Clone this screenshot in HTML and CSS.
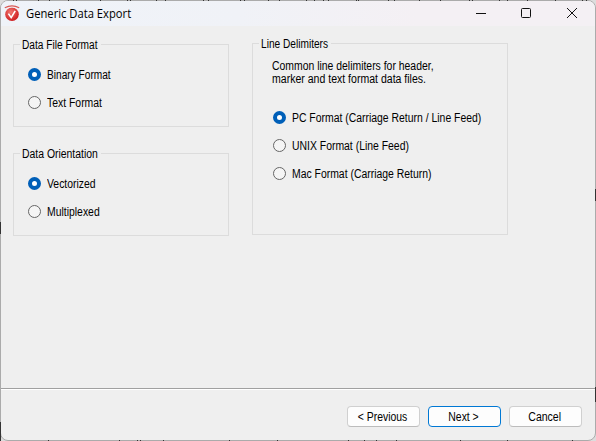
FILE: index.html
```html
<!DOCTYPE html>
<html lang="en">
<head>
<meta charset="utf-8">
<title>Generic Data Export</title>
<link rel="stylesheet" href="styles.css">
</head>
<body>
<div class="window">
  <header class="titlebar">
    <svg class="logo" width="16" height="17" viewBox="0 0 16 17">
      <defs><radialGradient id="ball" cx="40%" cy="35%" r="65%"><stop offset="0" stop-color="#f07872"/><stop offset="1" stop-color="#cf1e20"/></radialGradient></defs>
      <circle cx="8" cy="9.2" r="6.8" fill="url(#ball)"/>
      <path d="M.8 4.4Q8-1.2 15.2 4.4" fill="none" stroke="#f4eef2" stroke-width="1.4"/>
      <path d="M.8 2.8Q8-1.2 15.2 2.8" fill="none" stroke="#d85a55" stroke-width="1.3"/>
      <path d="M4.4 8.6l2.8 4L11.2 5.8" fill="none" stroke="#fff" stroke-width="1.6"/>
    </svg>
    <h1 class="title">Generic Data Export</h1>
    <svg class="controls" width="104" height="12" viewBox="0 0 104 12" fill="none" stroke="#111">
      <path d="M0 5.5h10"/><rect x="45.5" y=".5" width="9" height="9" rx="1"/><path d="M91 0l10 10M101 0L91 10"/>
    </svg>
  </header>
  <main class="content">
    <div class="column">
      <section class="group">
        <h2 class="legend l-long"><span class="t w-file">Data File Format</span></h2>
        <label class="option"><i class="radio on"></i><span class="t w-file">Binary Format</span></label>
        <label class="option"><i class="radio"></i><span class="t">Text Format</span></label>
      </section>
      <section class="group">
        <h2 class="legend l-long"><span class="t">Data Orientation</span></h2>
        <label class="option"><i class="radio on"></i><span class="t">Vectorized</span></label>
        <label class="option"><i class="radio"></i><span class="t">Multiplexed</span></label>
      </section>
    </div>
    <section class="group wide">
      <h2 class="legend l-short"><span class="t w-file">Line Delimiters</span></h2>
      <p class="hint"><span class="t">Common line delimiters for header,</span><br><span class="t w-hint">marker and text format data files.</span></p>
      <label class="option"><i class="radio on"></i><span class="t">PC Format (Carriage Return / Line Feed)</span></label>
      <label class="option"><i class="radio"></i><span class="t">UNIX Format (Line Feed)</span></label>
      <label class="option"><i class="radio"></i><span class="t">Mac Format (Carriage Return)</span></label>
    </section>
  </main>
  <footer class="footer">
    <button class="button"><span class="t">&lt; Previous</span></button>
    <button class="button primary"><span class="t">Next &gt;</span></button>
    <button class="button"><span class="t w-hint">Cancel</span></button>
  </footer>
</div>
<svg class="edge" width="596" height="441" fill="none" stroke="#333">
  <path d="M13 .5h1m2 0h1m21 0h1m10 0h1m18 0h1m31 0h1m26 0h1m2 0h1m25 0h1m8 0h1m37 0h1m4 0h1m31 0h1m3 0h1m23 0h1m10 0h1m26 0h1m7 0h1m8 0h1m4 0h1m27 0h1m1 0h1m29 0h1m5 0h1m24 0h1m20 0h1m28 0h1m2 0h1m26 0h1m7 0h1m19 0h1m27 0h1m26 0h1m3 0h1"/>
  <path d="M48 440.500h1m70 0h1m17 0h1m2 0h1m22 0h1m65 0h1m47 0h1m70 0h1m15 0h1m11 0h1m19 0h1m63 0h1m46 0h1m64 0h1"/>
  <path d="M.5 222v12M.5 422v19M595.5 189v12M595.5 387v15"/>
</svg>
</body>
</html>
```
FILE: styles.css
```css
* { box-sizing: border-box; }
body {
  margin: 0; width: 596px; height: 441px; overflow: hidden; background: #ddd;
  font: 12px/13px "Liberation Sans", Arial, sans-serif; color: #000;
}
.window {
  width: 596px; height: 441px; border: 1px solid #ababab; border-radius: 8px;
  background: #efefef; overflow: hidden; display: flex; flex-direction: column;
}
.titlebar {
  height: 25px; flex: none; display: flex; align-items: center; padding: 0 15px 0 3px;
  background: linear-gradient(90deg, #eff3f9, #f0f2f7 40%, #f4f0f4 70%, #f4f0f4);
}
.title {
  margin: 1px auto 0 6px; font: 400 12px/16px "Open Sans", "Noto Sans", sans-serif;
  transform: scaleX(.935); transform-origin: left;
}
.content { flex: 1; display: flex; align-items: flex-start; gap: 23px; padding: 17px 12px 0; }
.column { display: flex; flex-direction: column; gap: 26px; padding-top: 1px; }
.group { width: 216px; height: 83px; border: 1px solid #dcdcdc; padding-left: 7px; }
.legend {
  height: 13px; margin: -6px 0 16px -1px; padding: 0 2px;
  background: #efefef; font: inherit; white-space: nowrap;
}
.l-long { width: 81px; }
.l-short { width: 72px; }
.option { display: flex; align-items: center; gap: 6px; height: 13px; margin: 0 0 15px 7px; white-space: nowrap; }
.option .t { padding-top: 2px; }
.radio { width: 13px; height: 13px; flex: none; border: 1px solid #666; border-radius: 50%; background: #f5f5f5; }
.radio.on { border: 4px solid #005fb8; background: #fff; }
.wide { width: 256px; height: 192px; padding-left: 7px; }
.wide .legend { margin-bottom: 9px; }
.wide .option { margin-left: 13px; }
.hint { margin: 0 0 25px 12px; white-space: nowrap; }
.footer {
  height: 52px; flex: none; border-top: 1px solid #a0a0a0; box-shadow: inset 0 1px #fff;
  display: flex; justify-content: flex-end; gap: 8px; padding: 17px 13px 0 0;
}
.button {
  width: 73px; height: 21px; padding: 1px 2px 0 0; border: 1px solid #d0d0d0; border-bottom-color: #bcbcbc;
  border-radius: 4px; background: #fdfdfd; font: inherit; color: #000;
}
.primary { border-color: #0078d4; }
.t { display: inline-block; transform: scaleX(.868); transform-origin: left; }
.w-file { transform: scaleX(.845); }
.w-hint { transform: scaleX(.878); }
.button .t { transform-origin: center; }
.edge { position: absolute; left: 0; top: 0; pointer-events: none; }
```
